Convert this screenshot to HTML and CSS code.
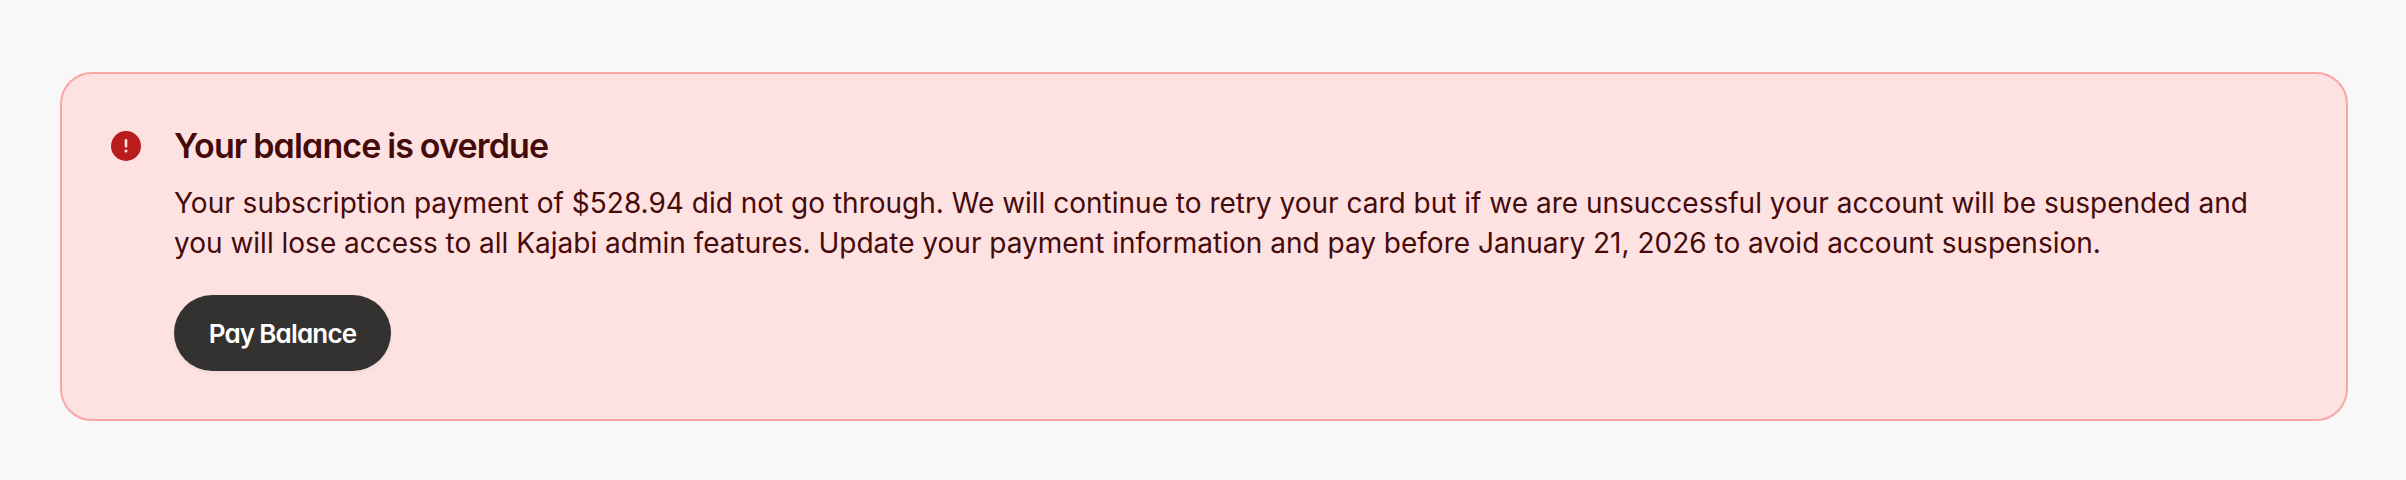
FILE: index.html
```html
<!DOCTYPE html>
<html lang="en">
<head>
<meta charset="utf-8">
<title>Billing</title>
<link rel="stylesheet" href="styles.css">
</head>
<body>
<section class="alert" role="alert">
  <svg class="alert-icon" viewBox="0 0 30 30" aria-hidden="true">
    <circle cx="15" cy="15" r="15" fill="#b91c1c"/>
    <path d="M15 9.4v5.8" stroke="#fee2e2" stroke-width="2.6" stroke-linecap="round"/>
    <circle cx="15" cy="20" r="1.5" fill="#fee2e2"/>
  </svg>
  <div class="alert-body">
    <h2 class="alert-title"><span>Your balance is overdue</span></h2>
    <p class="alert-text"><span>Your subscription payment of $528.94 did not go through. We will continue to retry your card but if we are unsuccessful your account will be suspended and</span><br><span>you will lose access to all Kajabi admin features. Update your payment information and pay before January 21, 2026 to avoid account suspension.</span></p>
    <button class="pay-button" type="button"><span>Pay Balance</span></button>
  </div>
</section>
</body>
</html>
```
FILE: styles.css
```css
* { box-sizing: border-box; }
body {
  margin: 0;
  padding: 72px 58px 0 60px;
  background: #f8f8f8;
  font-family: Inter, "Liberation Sans", sans-serif;
}
.alert {
  display: flex;
  align-items: flex-start;
  gap: 33px;
  height: 349px;
  padding: 48px 49px;
  border: 2px solid #fca5a5;
  border-radius: 32px;
  background: #fee2e2;
  color: #450a0a;
}
.alert-icon { flex: none; width: 30px; height: 30px; margin-top: 9px; }
.alert-body { flex: 1; }
.alert-title {
  margin: 0 0 13px;
  font-size: 34px;
  font-weight: 600;
  line-height: 48px;
  letter-spacing: -0.85px;
  word-spacing: -1px;
  font-feature-settings: "cv11";
}
.alert-text {
  margin: 0;
  font-size: 28px;
  line-height: 40px;
  white-space: nowrap;
}
.pay-button {
  display: flex;
  align-items: center;
  justify-content: center;
  width: 217px;
  height: 76px;
  margin-top: 32px;
  padding: 2px 0 0;
  border: 0;
  border-radius: 38px;
  background: #343230;
  box-shadow: 0 2px 4px rgba(0, 0, 0, 0.05);
  color: #fff;
  font: 600 26px/40px Inter, "Liberation Sans", sans-serif;
  letter-spacing: -0.82px;
  word-spacing: -0.8px;
  font-feature-settings: "cv11";
}
```
